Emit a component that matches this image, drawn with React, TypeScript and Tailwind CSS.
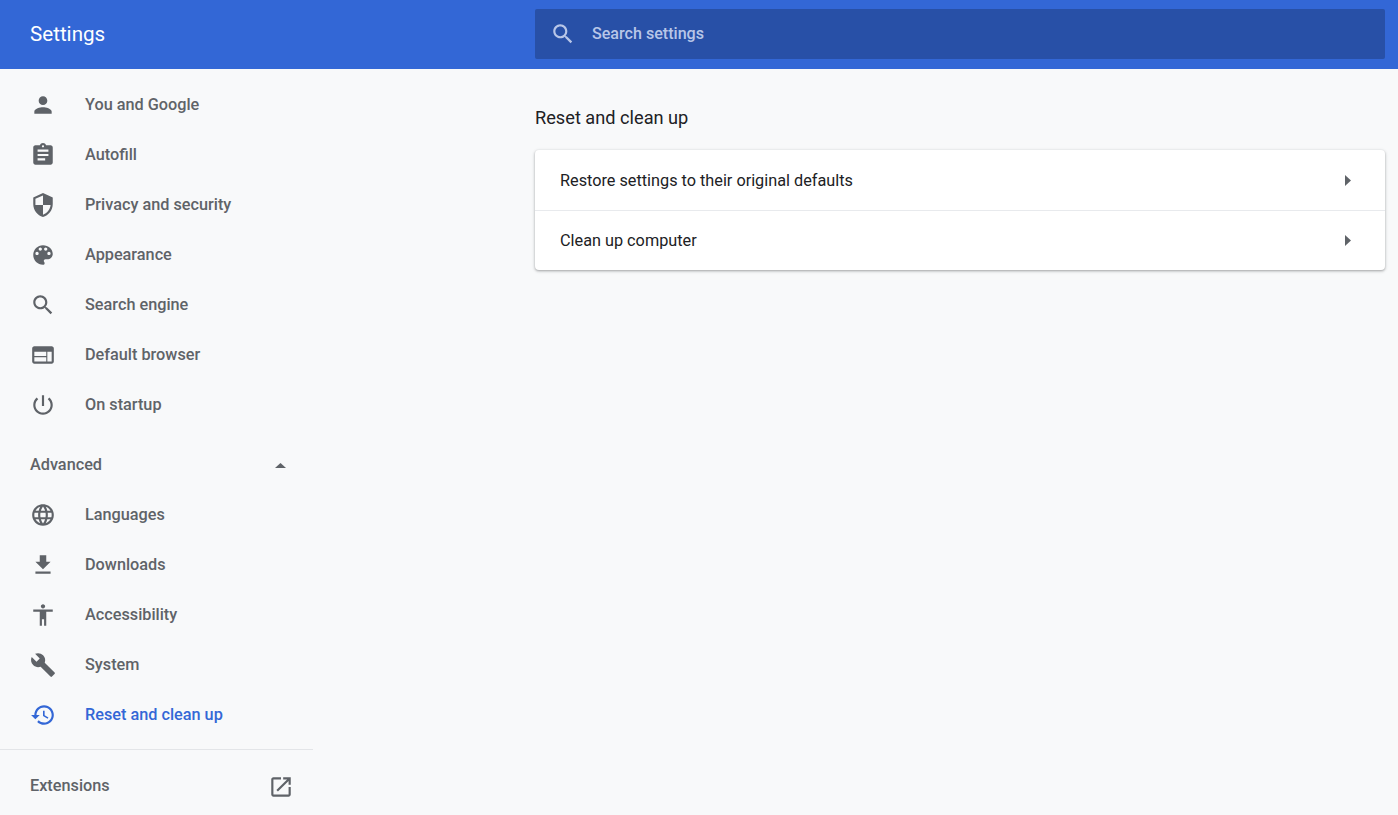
import React from "react";

interface NavItem {
  label: string;
  path: string;
  active?: boolean;
}

const searchPath =
  "M15.5 14h-.79l-.28-.27C15.41 12.59 16 11.11 16 9.5 16 5.91 13.09 3 9.5 3S3 5.91 3 9.5 5.91 16 9.5 16c1.61 0 3.09-.59 4.23-1.57l.27.28v.79l5 4.99L20.49 19l-4.99-5zm-6 0C7.01 14 5 11.99 5 9.5S7.01 5 9.5 5 14 7.01 14 9.5 11.99 14 9.5 14z";
const openPath =
  "M19 19H5V5h7V3H5c-1.11 0-2 .9-2 2v14c0 1.1.89 2 2 2h14c1.1 0 2-.9 2-2v-7h-2v7zM14 3v2h3.59l-9.83 9.83 1.41 1.41L19 6.41V10h2V3h-7z";

const basicItems: NavItem[] = [
  {
    label: "You and Google",
    path: "M12 12c2.21 0 4-1.79 4-4s-1.79-4-4-4-4 1.79-4 4 1.79 4 4 4zm0 2c-2.67 0-8 1.34-8 4v2h16v-2c0-2.66-5.33-4-8-4z",
  },
  {
    label: "Autofill",
    path: "M19 3h-4.18C14.4 1.84 13.3 1 12 1c-1.3 0-2.4.84-2.82 2H5c-1.1 0-2 .9-2 2v14c0 1.1.9 2 2 2h14c1.1 0 2-.9 2-2V5c0-1.1-.9-2-2-2zm-7 0c.55 0 1 .45 1 1s-.45 1-1 1-1-.45-1-1 .45-1 1-1zm2 14H7v-2h7v2zm3-4H7v-2h10v2zm0-4H7V7h10v2z",
  },
  {
    label: "Privacy and security",
    path: "M12 1L3 5v6c0 5.55 3.84 10.74 9 12 5.16-1.26 9-6.45 9-12V5l-9-4zm0 10.99h7c-.53 4.12-3.28 7.79-7 8.94V12H5V6.3l7-3.11v8.8z",
  },
  {
    label: "Appearance",
    path: "M12 3c-4.97 0-9 4.03-9 9s4.03 9 9 9c.83 0 1.5-.67 1.5-1.5 0-.39-.15-.74-.39-1.01-.23-.26-.38-.61-.38-.99 0-.83.67-1.5 1.5-1.5H16c2.76 0 5-2.24 5-5 0-4.42-4.03-8-9-8zm-5.5 9c-.83 0-1.5-.67-1.5-1.5S5.67 9 6.5 9 8 9.67 8 10.5 7.33 12 6.5 12zm3-4C8.67 8 8 7.33 8 6.5S8.67 5 9.5 5s1.5.67 1.5 1.5S10.33 8 9.5 8zm5 0c-.83 0-1.5-.67-1.5-1.5S13.67 5 14.5 5s1.5.67 1.5 1.5S15.33 8 14.5 8zm3 4c-.83 0-1.5-.67-1.5-1.5S16.67 9 17.5 9s1.5.67 1.5 1.5-.67 1.5-1.5 1.5z",
  },
  { label: "Search engine", path: searchPath },
  {
    label: "Default browser",
    path: "M20 4H4c-1.1 0-1.99.9-1.99 2L2 18c0 1.1.9 2 2 2h16c1.1 0 2-.9 2-2V6c0-1.1-.9-2-2-2zm-5 14H4v-4h11v4zm0-5H4V9h11v4zm5 5h-4V9h4v9z",
  },
  {
    label: "On startup",
    path: "M13 3h-2v10h2V3zm4.83 2.17l-1.42 1.42C17.99 7.86 19 9.81 19 12c0 3.87-3.13 7-7 7s-7-3.13-7-7c0-2.19 1.01-4.14 2.58-5.42L6.17 5.17C4.23 6.82 3 9.26 3 12c0 4.97 4.03 9 9 9s9-4.03 9-9c0-2.74-1.23-5.18-3.17-6.83z",
  },
];

const advancedItems: NavItem[] = [
  {
    label: "Languages",
    path: "M11.99 2C6.47 2 2 6.48 2 12s4.47 10 9.99 10C17.52 22 22 17.52 22 12S17.52 2 11.99 2zm6.93 6h-2.95c-.32-1.25-.78-2.45-1.38-3.56 1.84.63 3.37 1.91 4.33 3.56zM12 4.04c.83 1.2 1.48 2.53 1.91 3.96h-3.82c.43-1.43 1.08-2.76 1.91-3.96zM4.26 14C4.1 13.36 4 12.69 4 12s.1-1.36.26-2h3.38c-.08.66-.14 1.32-.14 2 0 .68.06 1.34.14 2H4.26zm.82 2h2.95c.32 1.25.78 2.45 1.38 3.56-1.84-.63-3.37-1.9-4.33-3.56zm2.95-8H5.08c.96-1.66 2.49-2.93 4.33-3.56C8.81 5.55 8.35 6.75 8.03 8zM12 19.96c-.83-1.2-1.48-2.53-1.91-3.96h3.82c-.43 1.43-1.08 2.76-1.91 3.96zM14.34 14H9.66c-.09-.66-.16-1.32-.16-2 0-.68.07-1.35.16-2h4.68c.09.65.16 1.32.16 2 0 .68-.07 1.34-.16 2zm.25 5.56c.6-1.11 1.06-2.31 1.38-3.56h2.95c-.96 1.65-2.49 2.93-4.33 3.56zM16.36 14c.08-.66.14-1.32.14-2 0-.68-.06-1.34-.14-2h3.38c.16.64.26 1.31.26 2s-.1 1.36-.26 2h-3.38z",
  },
  { label: "Downloads", path: "M19 9h-4V3H9v6H5l7 7 7-7zM5 18v2h14v-2H5z" },
  {
    label: "Accessibility",
    path: "M12 2c1.1 0 2 .9 2 2s-.9 2-2 2-2-.9-2-2 .9-2 2-2zm9 7h-6v13h-2v-6h-2v6H9V9H3V7h18v2z",
  },
  {
    label: "System",
    path: "M22.7 19l-9.1-9.1c.9-2.3.4-5-1.5-6.9-2-2-5-2.4-7.4-1.3L9 6 6 9 1.6 4.7C.4 7.1.9 10.1 2.9 12.1c1.9 1.9 4.6 2.4 6.9 1.5l9.1 9.1c.4.4 1 .4 1.4 0l2.3-2.3c.5-.4.5-1.1.1-1.4z",
  },
  {
    label: "Reset and clean up",
    active: true,
    path: "M13 3c-4.97 0-9 4.03-9 9H1l3.89 3.89.07.14L9 12H6c0-3.87 3.13-7 7-7s7 3.13 7 7-3.13 7-7 7c-1.93 0-3.68-.79-4.94-2.06l-1.42 1.42C8.27 19.99 10.51 21 13 21c4.97 0 9-4.03 9-9s-4.03-9-9-9zm-1 5v5l4.28 2.54.72-1.21-3.5-2.08V8H12z",
  },
];

const Icon = ({ path, className }: { path: string; className?: string }) => (
  <svg viewBox="0 0 24 24" fill="currentColor" className={className}>
    <path d={path} />
  </svg>
);

const NavRow = ({ item }: { item: NavItem }) => (
  <div
    className={
      "flex h-[50px] items-center pl-[29.5px] text-[16.25px] font-medium " +
      (item.active ? "text-[#3367d6]" : "text-[#5f6368]")
    }
  >
    <Icon path={item.path} className="h-[26px] w-[26px] shrink-0" />
    <span className="ml-[29.5px]">{item.label}</span>
  </div>
);

const CardRow = ({ label, divider }: { label: string; divider?: boolean }) => (
  <div
    className={
      "flex h-[60px] items-center justify-between border-t pl-[25px] pr-[34px] " +
      (divider ? "border-[#e8eaed]" : "border-transparent")
    }
  >
    <span className="pt-[2px] text-[16.25px] text-[#202124]">{label}</span>
    <svg viewBox="0 0 6 11" fill="#5f6368" className="h-[11px] w-[6px]">
      <path d="M0 0L6 5.5L0 11z" />
    </svg>
  </div>
);

export default function App() {
  return (
    <div className="flex h-[815px] flex-col overflow-hidden bg-[#f8f9fa] font-['Roboto',sans-serif]">
      <header className="flex h-[69px] shrink-0 items-center bg-[#3367d6] pb-[1px]">
        <h1 className="w-[535px] shrink-0 pl-[30px] text-[20.6px] font-normal text-white">
          Settings
        </h1>
        <div className="mr-[13px] flex h-[50px] flex-1 items-center rounded-[2px] bg-[#2850a7] pl-[14.5px] text-[#b8c6e8]">
          <Icon path={searchPath} className="h-[26px] w-[26px]" />
          <span className="ml-[16.5px] text-[16.1px] font-medium">
            Search settings
          </span>
        </div>
      </header>
      <div className="flex flex-1">
        <nav className="w-[313px] shrink-0 pt-[11px]">
          {basicItems.map((item) => (
            <NavRow key={item.label} item={item} />
          ))}
          <div className="mt-[10px] flex h-[50px] items-center justify-between pl-[30px] pr-[27px] text-[16.25px] font-medium text-[#5f6368]">
            <span>Advanced</span>
            <svg viewBox="0 0 11 5" fill="#5f6368" className="h-[5px] w-[11px]">
              <path d="M5.5 0L11 5H0z" />
            </svg>
          </div>
          {advancedItems.map((item) => (
            <NavRow key={item.label} item={item} />
          ))}
          <div className="mt-[9px] flex h-[74px] items-center justify-between border-t border-[#e3e5e8] pl-[30px] pr-[19.5px] text-[16.25px] font-medium text-[#5f6368]">
            <span>Extensions</span>
            <Icon path={openPath} className="h-[26px] w-[26px]" />
          </div>
        </nav>
        <main className="ml-[222px] mr-[13px] flex-1">
          <h2 className="mt-[36px] h-[45px] text-[18.2px] font-normal leading-[25px] text-[#202124]">
            Reset and clean up
          </h2>
          <div className="rounded-[4px] bg-white shadow-[0_1px_2px_rgba(60,64,67,0.3),0_1px_3px_1px_rgba(60,64,67,0.15)]">
            <CardRow label="Restore settings to their original defaults" />
            <CardRow label="Clean up computer" divider />
          </div>
        </main>
      </div>
    </div>
  );
}
